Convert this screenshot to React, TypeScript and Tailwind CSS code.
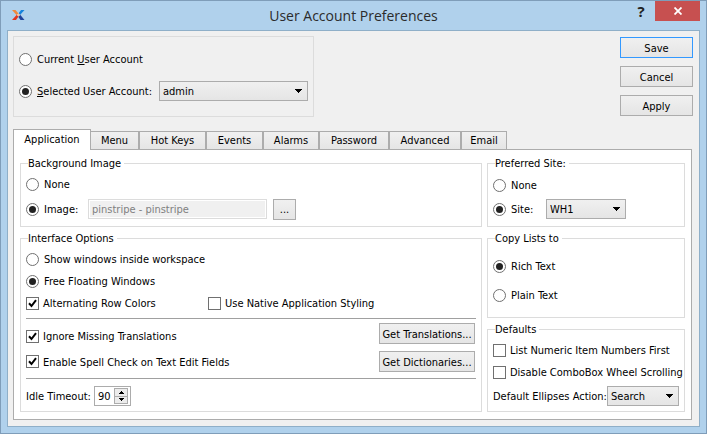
import type { InputHTMLAttributes, ReactNode, SelectHTMLAttributes } from "react";

const TABS = [
  { name: "Menu", width: "w-[48px] border-l-0" },
  { name: "Hot Keys", width: "w-[67px]" },
  { name: "Events", width: "w-[57px]" },
  { name: "Alarms", width: "w-[56px]" },
  { name: "Password", width: "w-[70px]" },
  { name: "Advanced", width: "w-[72px]" },
  { name: "Email", width: "w-[46px]" },
];

function Radio({ children, ...props }: { children: ReactNode } & InputHTMLAttributes<HTMLInputElement>) {
  return (
    <label className="flex h-4 items-center gap-[5px] whitespace-nowrap">
      <input
        type="radio"
        {...props}
        className="grid size-[13px] shrink-0 appearance-none place-items-center rounded-full border border-[#707070] bg-white checked:before:size-[7px] checked:before:rounded-full checked:before:bg-[#222]"
      />
      <span className="pt-0.5">{children}</span>
    </label>
  );
}

function Check({ children, ...props }: { children: ReactNode } & InputHTMLAttributes<HTMLInputElement>) {
  return (
    <label className="flex h-4 items-center gap-1 whitespace-nowrap">
      <span className="relative size-[13px] shrink-0">
        <input type="checkbox" {...props} className="peer block size-[13px] appearance-none border border-[#707070] bg-white" />
        <svg viewBox="0 0 13 13" className="pointer-events-none absolute inset-0 hidden size-[13px] peer-checked:block" fill="none" stroke="#000" strokeWidth="2">
          <path d="M3 6.3 5.5 9 10 3.2" />
        </svg>
      </span>
      <span className="pt-0.5">{children}</span>
    </label>
  );
}

function Button({ children, className = "", primary = false, label }: { children: ReactNode; className?: string; primary?: boolean; label?: string }) {
  return (
    <button
      type="button"
      aria-label={label}
      className={`flex h-[21px] items-center justify-center whitespace-nowrap border bg-linear-to-b from-[#f0f0f0] to-[#e5e5e5] pt-0.5 ${primary ? "border-[#3399ff]" : "border-[#acacac]"} ${className}`}
    >
      {children}
    </button>
  );
}

function Select({ value, className, ...props }: { value: string; className: string } & SelectHTMLAttributes<HTMLSelectElement>) {
  return (
    <span className={`relative block h-5 shrink-0 ${className}`}>
      <select
        {...props}
        defaultValue={value}
        className="block h-5 w-full appearance-none border border-[#acacac] bg-linear-to-b from-[#f0f0f0] to-[#e5e5e5] pt-0.5 pl-[3px]"
      >
        <option>{value}</option>
      </select>
      <svg viewBox="0 0 7 4" className="pointer-events-none absolute top-2 right-[6px] h-1 w-[7px]" shapeRendering="crispEdges">
        <path d="M0 0h7v1H6v1H5v1H4v1H3V3H2V2H1V1H0z" />
      </svg>
    </span>
  );
}

function Group({ title, className = "", children }: { title: string; className?: string; children: ReactNode }) {
  return (
    <fieldset className={`min-w-0 border border-[#dcdcdc] px-[5px] ${className}`}>
      <legend className="ml-0.5 h-[14px] pr-[3px] leading-4">{title}</legend>
      {children}
    </fieldset>
  );
}

export default function App() {
  return (
    <main className="flex min-h-screen flex-col border border-[#7f9db9] bg-[#b0d1ec] px-1.5 pb-1.5 font-['DejaVu_Sans_Condensed','DejaVu_Sans',sans-serif] text-[11px] leading-4 text-black">
      <header className="grid h-[29px] grid-cols-[1fr_auto_1fr] items-start">
        <svg viewBox="0 0 13 10" className="mt-[9px] ml-[5px] h-2.5 w-[13px]">
          <path d="M0 0h3.500L6.500 3.500 4.500 5z" fill="#f08a3c" />
          <path d="M12.500 0H9L6.500 3.500 8 5z" fill="#1583dc" />
          <path d="M0 10h4L6.500 6.500 5 4.500z" fill="#e2361f" />
          <path d="M12.500 10h-4L6 6.500 8 4.500z" fill="#20439b" />
          <path d="M6.500 3.200 8.300 5 6.500 6.800 4.700 5z" fill="#f6c7a8" />
        </svg>
        <h1 className="pt-1 font-['Open_Sans','Noto_Sans',sans-serif] text-[14px] leading-[22px] text-[#2b2b2b]">User Account Preferences</h1>
        <div className="flex justify-end">
          <button type="button" className="h-5 w-[28px] font-['Open_Sans',sans-serif] text-[15px] leading-5 font-bold text-[#222]">?</button>
          <button type="button" aria-label="Close" className="grid h-5 w-[45px] place-items-center bg-[#c75050]">
            <svg viewBox="0 0 8 8" className="size-2" stroke="#fff" strokeWidth="1.800">
              <path d="m0.500 0.500 7 7m0-7-7 7" />
            </svg>
          </button>
        </div>
      </header>

      <div className="flex flex-1 flex-col border border-[#8fafc8] bg-[#f0f0f0] pt-[5px] pr-1.5 pb-1.5 pl-[5px]">
        <div className="flex items-start justify-between">
          <div className="flex h-[81px] w-[301px] flex-col gap-4 border border-[#dcdcdc] px-[5px] pt-[14px]">
            <Radio name="account">Current <u>U</u>ser Account</Radio>
            <div className="flex h-4 items-center justify-between">
              <Radio name="account" defaultChecked><u>S</u>elected User Account:</Radio>
              <Select value="admin" aria-label="User account" className="w-[149px]" />
            </div>
          </div>
          <div className="flex w-[73px] flex-col gap-2 pt-px">
            <Button primary>Save</Button>
            <Button>Cancel</Button>
            <Button>Apply</Button>
          </div>
        </div>

        <div role="tablist" className="mt-3 flex h-5 items-end">
          <button type="button" role="tab" aria-selected="true" className="relative -mb-px h-[21px] w-[78px] border border-b-0 border-[#acacac] bg-white">
            Application
          </button>
          {TABS.map((tab) => (
            <button key={tab.name} type="button" role="tab" aria-selected="false" className={`h-[18px] border-x border-t border-[#acacac] bg-linear-to-b from-[#f0f0f0] to-[#e5e5e5] pt-px ${tab.width}`}>
              {tab.name}
            </button>
          ))}
        </div>

        <div className="mr-px flex flex-1 gap-[5px] border border-[#acacac] bg-white px-1.5 pt-1.5 pb-[7px]">
          <div className="flex flex-1 flex-col gap-1">
            <Group title="Background Image" className="h-[71px]">
              <div className="flex flex-col gap-[9px] pt-1.5">
                <Radio name="background">None</Radio>
                <div className="flex h-4 items-center">
                  <Radio name="background" defaultChecked>Image:</Radio>
                  <input aria-label="Image name" disabled defaultValue="pinstripe - pinstripe" className="ml-auto h-5 w-[179px] border border-[#dcdcdc] bg-[#f0f0f0] px-[3px] pt-px text-[#808080] shadow-[inset_0_0_0_1px_white]" />
                  <Button label="Browse images" className="mr-[180px] ml-1.5 w-[23px]">...</Button>
                </div>
              </div>
            </Group>
            <Group title="Interface Options" className="flex-1">
              <div className="flex flex-col gap-1.5 pt-1.5">
                <Radio name="windows">Show windows inside workspace</Radio>
                <Radio name="windows" defaultChecked>Free Floating Windows</Radio>
                <div className="grid grid-cols-[182px_1fr]">
                  <Check defaultChecked>Alternating Row Colors</Check>
                  <Check>Use Native Application Styling</Check>
                </div>
              </div>
              <div className="mt-[7px] flex flex-col gap-[7px] border-y border-[#a0a0a0] pt-1 pb-1.5">
                <div className="flex items-end justify-between pr-px">
                  <Check defaultChecked>Ignore Missing Translations</Check>
                  <Button className="w-[96px]">Get Translations...</Button>
                </div>
                <div className="flex items-center justify-between pr-px">
                  <Check defaultChecked>Enable Spell Check on Text Edit Fields</Check>
                  <Button className="w-[96px]">Get Dictionaries...</Button>
                </div>
              </div>
              <div className="mt-[7px] flex items-center">
                <label htmlFor="idle" className="w-[68px] pt-0.5 whitespace-nowrap">Idle Timeout:</label>
                <span className="flex h-5 w-[37px] items-center border border-[#acacac] bg-white pr-0.5">
                  <input id="idle" defaultValue="90" className="w-0 flex-1 pt-0.5 pl-[3px]" />
                  <span className="flex h-4 w-[14px] flex-col border border-[#acacac] bg-[#ececec]">
                    <button type="button" aria-label="Increase" className="grid flex-1 place-items-center border-b border-[#acacac]">
                      <svg viewBox="0 0 5 3" className="h-[3px] w-[5px]" shapeRendering="crispEdges"><path d="M2 0h1v1h1v1h1v1H0V2h1V1h1z" /></svg>
                    </button>
                    <button type="button" aria-label="Decrease" className="grid flex-1 place-items-center">
                      <svg viewBox="0 0 5 3" className="h-[3px] w-[5px]" shapeRendering="crispEdges"><path d="M0 0h5v1H4v1H3v1H2V2H1V1H0z" /></svg>
                    </button>
                  </span>
                </span>
              </div>
            </Group>
          </div>

          <div className="flex w-[198px] flex-col gap-1">
            <Group title="Preferred Site:" className="h-[71px]">
              <div className="flex flex-col gap-2 pt-[7px]">
                <Radio name="site">None</Radio>
                <div className="flex h-4 items-center">
                  <Radio name="site" defaultChecked>Site:</Radio>
                  <Select value="WH1" aria-label="Preferred site" className="mr-[53px] ml-auto w-[80px]" />
                </div>
              </div>
            </Group>
            <Group title="Copy Lists to" className="h-[87px]">
              <div className="flex flex-col gap-[13px] pt-[13px]">
                <Radio name="copy" defaultChecked>Rich Text</Radio>
                <Radio name="copy">Plain Text</Radio>
              </div>
            </Group>
            <Group title="Defaults" className="flex-1">
              <div className="flex flex-col gap-1.5 pt-1.5">
                <Check>List Numeric Item Numbers First</Check>
                <Check>Disable ComboBox Wheel Scrolling</Check>
                <div className="flex items-center justify-between">
                  <label htmlFor="ellipses" className="pt-0.5 whitespace-nowrap">Default Ellipses Action:</label>
                  <Select id="ellipses" value="Search" className="w-[72px]" />
                </div>
              </div>
            </Group>
          </div>
        </div>
      </div>
    </main>
  );
}
